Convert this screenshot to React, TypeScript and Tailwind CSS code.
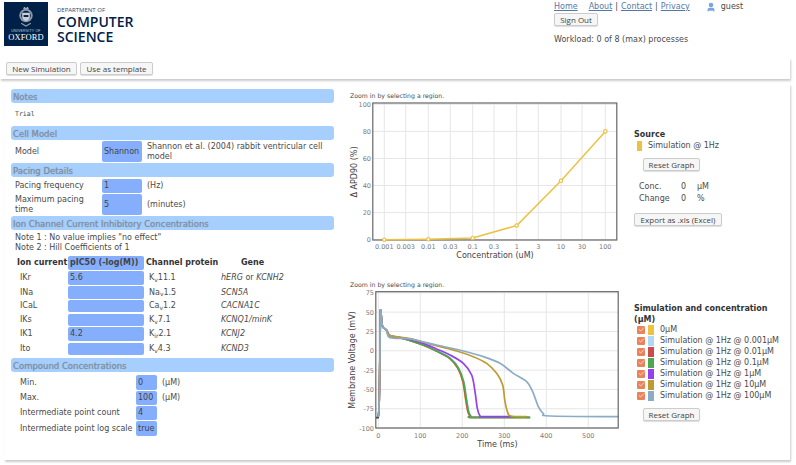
import { Check, User } from "lucide-react";

type Pt = [number, number];

// trace points are read off the 3x crop, so convert them to page coordinates
const toPage = (pts: Pt[]) => pts.map(([x, y]) => [340 + x / 3, 275 + y / 3] as Pt);

const smooth = (raw: Pt[]) => {
  const p = toPage(raw);
  let d = `M${p[0][0]} ${p[0][1]}`;
  for (let i = 0; i < p.length - 1; i++) {
    const a = p[Math.max(i - 1, 0)];
    const b = p[i];
    const c = p[i + 1];
    const e = p[Math.min(i + 2, p.length - 1)];
    const c1x = b[0] + (c[0] - a[0]) / 6;
    const c1y = b[1] + (c[1] - a[1]) / 6;
    const c2x = c[0] - (e[0] - b[0]) / 6;
    const c2y = c[1] - (e[1] - b[1]) / 6;
    d += `C${c1x} ${c1y} ${c2x} ${c2y} ${c[0]} ${c[1]}`;
  }
  return d;
};

const spike: Pt[] = [
  [108, 428],
  [114, 427],
  [117, 400],
  [119, 300],
  [121, 130],
  [122, 106],
  [125, 135],
  [128, 155],
  [140, 166],
];

const baseTrace: Pt[] = [
  ...spike,
  [150, 183],
  [180, 188],
  [210, 196],
  [250, 210],
  [290, 228],
  [330, 250],
  [355, 280],
  [370, 320],
  [378, 370],
  [385, 410],
  [392, 424],
  [402, 427],
  [570, 427],
];

const traces = [
  { color: "#edc240", d: smooth(baseTrace.map(([x, y]) => (x > 140 ? [x - 2, y - 1] : [x, y]) as Pt)) },
  { color: "#afd8f8", d: smooth(baseTrace.map(([x, y]) => (x > 140 ? [x + 1, y - 1] : [x, y]) as Pt)) },
  { color: "#cb4b4b", d: smooth(baseTrace.map(([x, y]) => (x > 140 ? [x - 1, y] : [x, y]) as Pt)) },
  { color: "#4da74d", d: smooth(baseTrace.map(([x, y]) => (x > 140 ? [x + 1, y + 1] : [x, y]) as Pt)) },
  {
    color: "#9440ed",
    d: smooth([
      ...spike,
      [150, 182],
      [210, 193],
      [250, 205],
      [290, 222],
      [330, 240],
      [370, 265],
      [395, 300],
      [405, 350],
      [412, 400],
      [420, 423],
      [430, 425],
      [515, 425],
    ]),
  },
  {
    color: "#bd9b33",
    d: smooth([
      ...spike,
      [150, 182],
      [210, 191],
      [280, 210],
      [350, 228],
      [400, 245],
      [440, 265],
      [470, 295],
      [488, 330],
      [495, 380],
      [503, 412],
      [512, 423],
      [560, 425],
    ]),
  },
  {
    color: "#8cacc6",
    d: smooth([
      ...spike,
      [150, 188],
      [210, 192],
      [290, 210],
      [370, 228],
      [430, 245],
      [480, 265],
      [520, 295],
      [560, 320],
      [578, 350],
      [595, 395],
      [610, 416],
      [630, 423],
      [835, 425],
    ]),
  },
];

const legendRows = [
  ["#edc240", "0µM"],
  ["#afd8f8", "Simulation @ 1Hz @ 0.001µM"],
  ["#cb4b4b", "Simulation @ 1Hz @ 0.01µM"],
  ["#4da74d", "Simulation @ 1Hz @ 0.1µM"],
  ["#9440ed", "Simulation @ 1Hz @ 1µM"],
  ["#bd9b33", "Simulation @ 1Hz @ 10µM"],
  ["#8cacc6", "Simulation @ 1Hz @ 100µM"],
];

const Bar = ({ title }: { title: string }) => (
  <div className="h-[14px] rounded-[3px] bg-[#a6cffd] pl-[2px] text-[8.5px] leading-[16px] text-[#7f8fa3] [text-shadow:0_0_1px_#8696aa]">
    {title}
  </div>
);

const Btn = ({ label, className }: { label: string; className: string }) => (
  <button
    className={`flex h-[13px] shrink-0 items-center justify-center whitespace-nowrap rounded-[2px] border border-[#ccc] bg-[#f6f6f6] text-[8px] text-[#444] shadow-[0_1px_1px_#ddd] font-['Open_Sans',sans-serif] ${className}`}
  >
    {label}
  </button>
);

const Cell = ({ value, className }: { value?: string; className: string }) => (
  <div className={`flex shrink-0 items-center whitespace-nowrap rounded-[2px] bg-[#85aefc] pl-[2px] text-[#444] ${className}`}>
    {value}
  </div>
);

const ionRows = [
  { name: "IKr", h: "h-[14px]", mb: "mb-px", value: "5.6", chan: "K", sub: "v", num: "11.1", gene: "hERG", rest: " or ", gene2: "KCNH2" },
  { name: "INa", h: "h-[13px]", mb: "mb-px", chan: "Na", sub: "v", num: "1.5", gene: "SCN5A" },
  { name: "ICaL", h: "h-[12px]", mb: "mb-[2px]", chan: "Ca", sub: "v", num: "1.2", gene: "CACNA1C" },
  { name: "IKs", h: "h-[12px]", mb: "mb-px", chan: "K", sub: "v", num: "7.1", gene: "KCNQ1/minK" },
  { name: "IK1", h: "h-[14px]", mb: "mb-[2px]", value: "4.2", chan: "K", sub: "ir", num: "2.1", gene: "KCNJ2" },
  { name: "Ito", h: "h-[12px]", mb: "", chan: "K", sub: "v", num: "4.3", gene: "KCND3" },
];

const compoundRows = [
  { label: "Min.", value: "0", unit: "(µM)", h: "h-[15px]", mb: "mb-px" },
  { label: "Max.", value: "100", unit: "(µM)", h: "h-[14px]", mb: "mb-px" },
  { label: "Intermediate point count", value: "4", h: "h-[14px]", mb: "mb-px" },
  { label: "Intermediate point log scale", value: "true", h: "h-[15px]", mb: "" },
];

const ConcChart = () => {
  const xs = [384.3, 405.7, 428.3, 450.3, 472.7, 494, 516.7, 538.3, 561, 582, 605.3];
  const xLabels = ["0.001", "0.003", "0.01", "0.03", "0.1", "0.3", "1", "3", "10", "30", "100"];
  const yOf = (v: number) => 239.7 - v * 1.354;
  const line: Pt[] = [
    [xs[0], yOf(0)],
    [xs[2], yOf(0.3)],
    [xs[4], yOf(1.3)],
    [xs[6], yOf(10.5)],
    [xs[8], yOf(43.5)],
    [xs[10], yOf(80)],
  ];
  return (
    <svg viewBox="344 100 284 170" className="block h-[170px] w-[284px]" fontFamily="'DejaVu Sans', sans-serif">
      {xs.map((x) => (
        <line key={x} x1={x} x2={x} y1={103} y2={240} stroke="#e6e6e6" />
      ))}
      {[0, 20, 40, 60, 80, 100].map((v) => (
        <g key={v}>
          <line x1={373} x2={617} y1={yOf(v)} y2={yOf(v)} stroke="#e6e6e6" />
          <text x={371} y={yOf(v) + 2.5} textAnchor="end" fontSize={6.5} fill="#7a7a7a">
            {v}
          </text>
        </g>
      ))}
      {xs.map((x, i) => (
        <text key={x} x={x} y={249} textAnchor="middle" fontSize={6.5} fill="#7a7a7a">
          {xLabels[i]}
        </text>
      ))}
      <rect x={372.8} y={103} width={244} height={137} fill="none" stroke="#666" strokeWidth={1.2} />
      <polyline
        points={line.map((p) => p.join(",")).join(" ")}
        fill="none"
        stroke="#edc240"
        strokeWidth={1.5}
      />
      {line.map(([x, y]) => (
        <circle key={x} cx={x} cy={y} r={1.7} fill="#fff" stroke="#edc240" strokeWidth={1.2} />
      ))}
      <text x={495} y={258} textAnchor="middle" fontSize={8} fill="#444">
        Concentration (uM)
      </text>
      <text transform="translate(357 172) rotate(-90)" textAnchor="middle" fontSize={8} fill="#444">
        Δ APD90 (%)
      </text>
    </svg>
  );
};

const VoltageChart = () => {
  const xTicks = [0, 100, 200, 300, 400, 500];
  const yTicks = [75, 50, 25, 0, -25, -50, -75, -100];
  const xOf = (t: number) => 378.3 + t * 0.42;
  const yOf = (v: number) => 350.8 - v * 0.773;
  return (
    <svg viewBox="344 289 284 169" className="block h-[169px] w-[284px]" fontFamily="'DejaVu Sans', sans-serif">
      {xTicks.map((t) => (
        <g key={t}>
          <line x1={xOf(t)} x2={xOf(t)} y1={292} y2={428} stroke="#e6e6e6" />
          <text x={xOf(t)} y={438} textAnchor="middle" fontSize={6.5} fill="#7a7a7a">
            {t}
          </text>
        </g>
      ))}
      {yTicks.map((v) => (
        <g key={v}>
          <line x1={376} x2={618} y1={yOf(v)} y2={yOf(v)} stroke="#e6e6e6" />
          <text x={374} y={yOf(v) + 2.5} textAnchor="end" fontSize={6.5} fill="#7a7a7a">
            {v}
          </text>
        </g>
      ))}
      {traces.map((t) => (
        <path key={t.color} d={t.d} fill="none" stroke={t.color} strokeWidth={1.7} strokeLinejoin="round" />
      ))}
      <path d="M376 417.5H379" stroke="#444" strokeWidth={1.2} />
      <rect x={375.8} y={291.7} width={242.4} height={136.3} fill="none" stroke="#666" strokeWidth={1.2} />
      <text x={497.5} y={447} textAnchor="middle" fontSize={8} fill="#444">
        Time (ms)
      </text>
      <text transform="translate(355 360) rotate(-90)" textAnchor="middle" fontSize={8} fill="#444">
        Membrane Voltage (mV)
      </text>
    </svg>
  );
};

const Logo = () => (
  <div className="ml-1 mt-[2px] flex h-[44px] w-[44px] shrink-0 flex-col items-center bg-[#002147] text-white">
    <svg viewBox="0 0 18 24" className="mt-[3px] h-[23px] w-[18px]">
      <circle cx={9} cy={11} r={7} fill="#8d99aa" />
      <circle cx={9} cy={11} r={5} fill="#002147" />
      <path d="M5 8h8v5c0 2-2 3-4 4-2-1-4-2-4-4z" fill="#c9d0d9" />
      <path d="M6.5 10.5h5v2h-5z" fill="#002147" />
      <path d="M6 4l1-2 2 1 2-1 1 2z" fill="#c9d0d9" />
      <path d="M4 19l5 3 5-3" stroke="#8d99aa" strokeWidth={1.2} fill="none" />
    </svg>
    <div className="mt-px text-[3.5px] leading-[4px] tracking-[0.2px] text-[#c9d0d9] font-['Liberation_Sans',sans-serif]">
      UNIVERSITY OF
    </div>
    <div className="text-[8.5px] leading-[9px] tracking-[0.1px] font-['Liberation_Serif',serif]">OXFORD</div>
  </div>
);

export default function App() {
  return (
    <div className="h-[465px] w-[796px] overflow-hidden bg-white text-[8px] text-[#4a4a4a] font-['DejaVu_Sans',sans-serif]">
      <header className="flex h-[58px]">
        <Logo />
        <div className="ml-[9px] w-[497px] shrink-0 pt-[7px] text-[#002147] font-['Open_Sans',sans-serif]">
          <div className="text-[6px] leading-[7px] text-[#33496b]">DEPARTMENT OF</div>
          <div className="text-[14px] font-semibold leading-[15px]">COMPUTER</div>
          <div className="text-[14px] font-semibold leading-[15px]">SCIENCE</div>
        </div>
        <div className="pt-[2px]">
          <div className="flex h-[10px] items-center whitespace-nowrap">
            <a className="text-[#5578a8] underline">Home</a>
            <a className="ml-[11px] text-[#5578a8] underline">About</a>
            <span className="mx-[3px]">|</span>
            <a className="text-[#5578a8] underline">Contact</a>
            <span className="mx-[3px]">|</span>
            <a className="text-[#5578a8] underline">Privacy</a>
            <User className="ml-[16px] h-[10px] w-[10px] fill-[#7ba5e0] text-[#7ba5e0]" strokeWidth={3} />
            <span className="ml-[5px]">guest</span>
          </div>
          <Btn label="Sign Out" className="mt-[1px] w-[44px]" />
          <div className="mt-[8px] leading-[12px]">Workload: 0 of 8 (max) processes</div>
        </div>
      </header>

      <div className="flex h-[21px] w-[790px] items-center gap-[3px] pl-[6px] shadow-[1px_2px_2px_#ccc]">
        <Btn label="New Simulation" className="w-[71px]" />
        <Btn label="Use as template" className="w-[73px]" />
      </div>

      <main className="ml-[4px] mt-[5px] flex h-[376px] w-[786px] shadow-[1px_2px_2px_#ccc]">
        <section className="ml-[7px] w-[323px] shrink-0 pt-[5px]">
          <Bar title="Notes" />
          <div className="flex h-[23px] items-center pl-[4px] text-[6.5px] font-['DejaVu_Sans_Mono',monospace]">Trial</div>

          <Bar title="Cell Model" />
          <div className="flex h-[23px] items-center">
            <div className="w-[91px] pl-[4px]">Model</div>
            <Cell value="Shannon" className="h-[21px] w-[40px]" />
            <div className="ml-[5px] w-[185px] leading-[10px]">Shannon et al. (2004) rabbit ventricular cell model</div>
          </div>

          <Bar title="Pacing Details" />
          <div className="mt-[2px] flex h-[14px] items-center">
            <div className="w-[91px] pl-[4px]">Pacing frequency</div>
            <Cell value="1" className="h-[14px] w-[40px]" />
            <div className="ml-[5px]">(Hz)</div>
          </div>
          <div className="mt-px flex h-[21px] items-center">
            <div className="w-[91px] pl-[4px] pr-[12px] leading-[10px]">Maximum pacing time</div>
            <Cell value="5" className="h-[21px] w-[40px]" />
            <div className="ml-[5px]">(minutes)</div>
          </div>

          <div className="mt-px">
            <Bar title="Ion Channel Current Inhibitory Concentrations" />
          </div>
          <div className="h-[26px] pl-[4px] pt-[3px] leading-[10px]">
            <div>Note 1 : No value implies "no effect"</div>
            <div>Note 2 : Hill Coefficients of 1</div>
          </div>

          <div className="flex h-[14px] items-center whitespace-nowrap font-bold text-[#333]">
            <div className="w-[57px] pl-[6px]">Ion current</div>
            <Cell value="pIC50 (-log(M))" className="h-[14px] w-[76px]" />
            <div className="ml-[2px] w-[75px]">Channel protein</div>
            <div className="pl-[20px]">Gene</div>
          </div>
          <div className="mt-px">
            {ionRows.map((r) => (
              <div key={r.name} className={`flex items-center ${r.h} ${r.mb}`}>
                <div className="w-[57px] pl-[9px]">{r.name}</div>
                <Cell value={r.value} className="h-full w-[76px]" />
                <div className="ml-[5px] w-[72px] leading-[10px]">
                  {r.chan}
                  <sub className="text-[6px]">{r.sub}</sub>
                  {r.num}
                </div>
                <div>
                  <i>{r.gene}</i>
                  {r.rest}
                  {r.gene2 && <i>{r.gene2}</i>}
                </div>
              </div>
            ))}
          </div>

          <div className="mt-[3px]">
            <Bar title="Compound Concentrations" />
          </div>
          <div className="mt-[3px]">
            {compoundRows.map((r) => (
              <div key={r.label} className={`flex items-center ${r.h} ${r.mb}`}>
                <div className="w-[125px] whitespace-nowrap pl-[9px]">{r.label}</div>
                <Cell value={r.value} className="h-full w-[21px]" />
                {r.unit && <div className="ml-[5px]">{r.unit}</div>}
              </div>
            ))}
          </div>
        </section>

        <section className="ml-[10px] w-[284px] shrink-0">
          <div className="mt-[8px] h-[8px] pl-[6px] text-[6.2px] leading-[8px]">Zoom in by selecting a region.</div>
          <ConcChart />
          <div className="mt-[11px] h-[8px] pl-[6px] text-[6.2px] leading-[8px]">Zoom in by selecting a region.</div>
          <VoltageChart />
        </section>

        <section className="ml-[6px] w-[150px]">
          <div className="mt-[45px] font-bold leading-[11px] text-[#333]">Source</div>
          <div className="flex h-[11px] items-center pl-[3px]">
            <span className="h-[10px] w-[5px] bg-[#edc240]" />
            <span className="ml-[6px]">Simulation @ 1Hz</span>
          </div>
          <Btn label="Reset Graph" className="ml-[9px] mt-[7px] w-[57px]" />
          <div className="mt-[10px] flex h-[12px] items-center pl-[5px]">
            <span className="w-[42px]">Conc.</span>
            <span className="w-[16px]">0</span>
            <span>µM</span>
          </div>
          <div className="flex h-[12px] items-center pl-[5px]">
            <span className="w-[42px]">Change</span>
            <span className="w-[16px]">0</span>
            <span>%</span>
          </div>
          <Btn label="Export as .xls (Excel)" className="mt-[8px] w-[88px]" />

          <div className="mt-[77px] w-[135px] font-bold leading-[11px] text-[#333]">
            Simulation and concentration (µM)
          </div>
          <div className="mt-[-1px]">
            {legendRows.map(([color, label]) => (
              <div key={label} className="flex h-[11px] items-center pl-[3px]">
                <span className="flex h-[8px] w-[8px] shrink-0 items-center justify-center rounded-[1px] bg-[#e8835c]">
                  <Check className="h-[7px] w-[7px] text-[#f3e4dc]" strokeWidth={3} />
                </span>
                <span className="ml-[3px] h-[10px] w-[6px] shrink-0" style={{ backgroundColor: color }} />
                <span className="ml-[6px] whitespace-nowrap">{label}</span>
              </div>
            ))}
          </div>
          <Btn label="Reset Graph" className="ml-[9px] mt-[7px] w-[57px]" />
        </section>
      </main>
    </div>
  );
}
